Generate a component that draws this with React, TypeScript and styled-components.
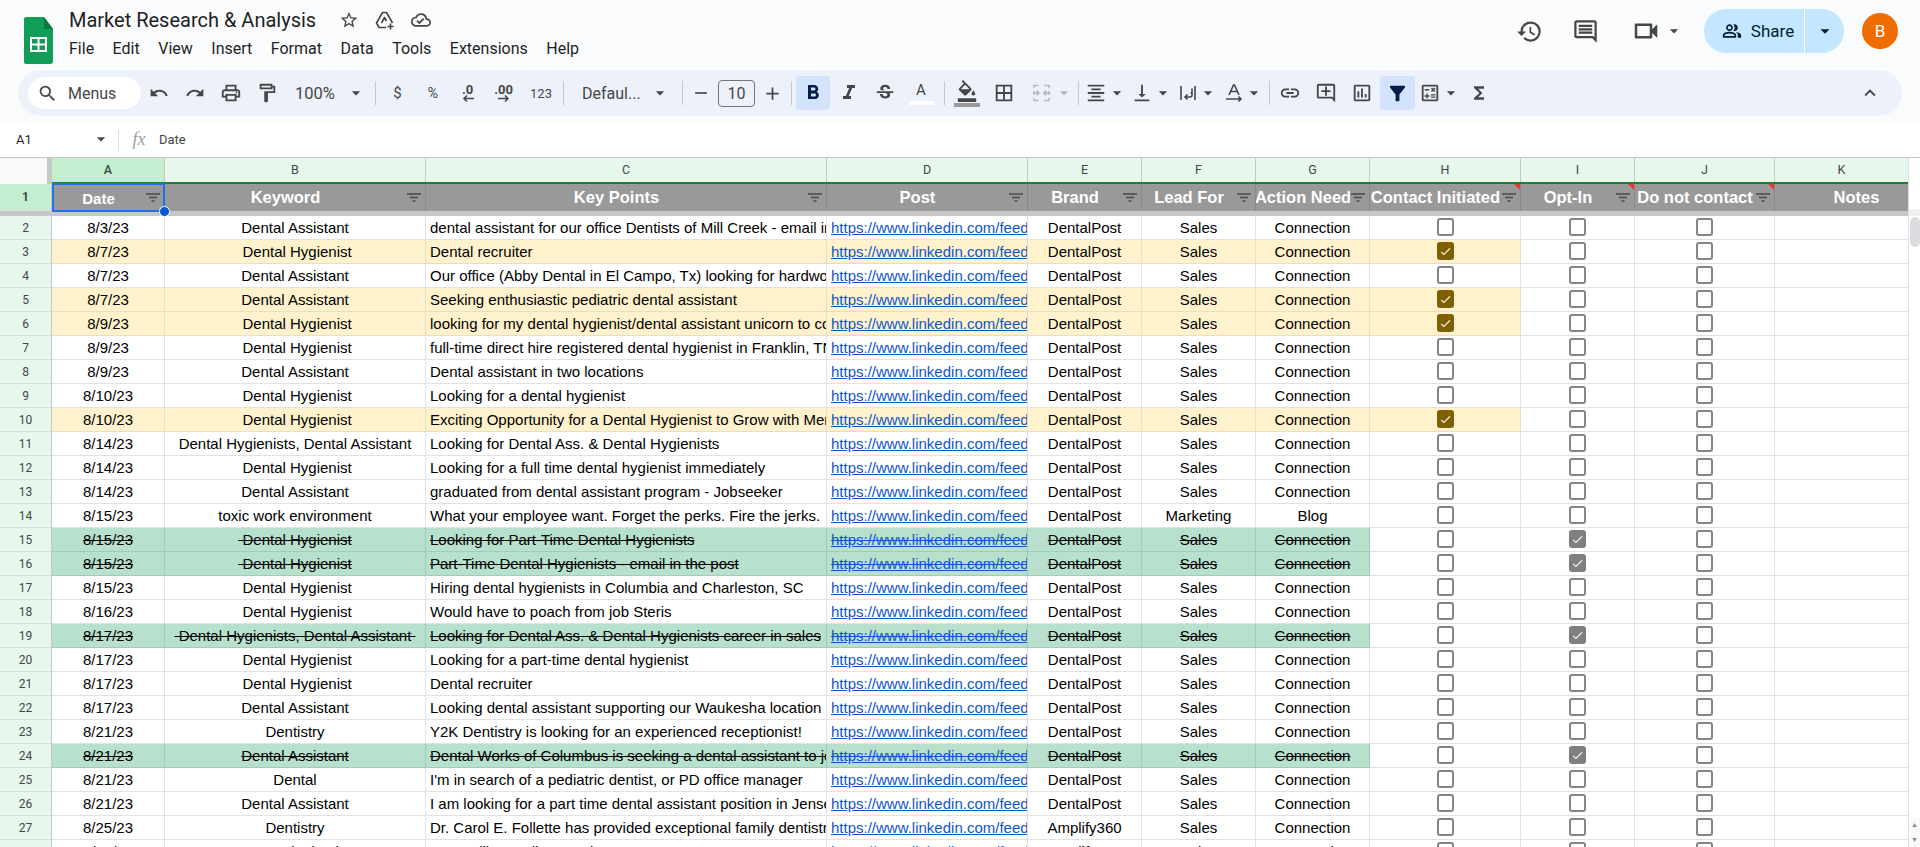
import React from "react";
import styled, { createGlobalStyle } from "styled-components";
import {
  MdSearch, MdUndo, MdRedo, MdOutlinePrint, MdOutlineFormatPaint, MdArrowDropDown, MdFormatBold,
  MdFormatItalic, MdStrikethroughS, MdFormatColorFill, MdBorderAll, MdFormatAlignCenter, MdVerticalAlignBottom,
  MdLink, MdOutlineAddComment, MdOutlineInsertChart, MdFilterAlt, MdFunctions, MdKeyboardArrowUp,
  MdHistory, MdOutlineComment, MdOutlineVideocam, MdOutlinePeopleAlt, MdStarBorder, MdOutlineCloudDone,
  MdAdd, MdRemove, MdCheck, MdOutlineCalculate,
} from "react-icons/md";

const Global = createGlobalStyle`
  html, body { margin: 0; padding: 0; height: 100%; overflow: hidden; background: #f9fbfd; }
  #root { height: 100%; }
`;

const Page = styled.div`
  height: 847px; overflow: hidden; display: flex; flex-direction: column; background: #f9fbfd;
  font-family: Roboto, "Liberation Sans", sans-serif; color: #444746;
`;

/* ---------- title bar ---------- */
const TitleBar = styled.header`
  height: 70px; flex: none; display: flex; align-items: flex-start; padding: 0 22px 0 24px; box-sizing: border-box;
`;
const Logo = styled.svg` width: 29px; height: 47px; margin-top: 17px; flex: none; `;
const TitleBlock = styled.div` margin-left: 16px; display: flex; flex-direction: column; `;
const TitleRow = styled.div` display: flex; align-items: center; height: 26px; margin-top: 7px; `;
const DocTitle = styled.div` font-size: 20px; color: #1f1f1f; width: 262px; white-space: nowrap; `;
const TitleIcon = styled.span`
  width: 36px; display: flex; justify-content: center; font-size: 20px; color: #444746;
`;
const Menu = styled.nav` display: flex; gap: 18.5px; margin-top: 6px; font-size: 16px; color: #1f1f1f; line-height: 20px; `;
const HeaderActions = styled.div` margin-left: auto; display: flex; align-items: center; height: 44px; margin-top: 9px; `;
const RoundAction = styled.span<{ $w: number }>`
  width: ${p => p.$w}px; display: flex; align-items: center; justify-content: center; color: #444746; font-size: 27px;
`;
const VideoAction = styled.span`
  width: 85px; padding-left: 18px; box-sizing: border-box; display: flex; align-items: center; gap: 3px; color: #444746; font-size: 30px;
`;
const SharePill = styled.div`
  display: flex; height: 44px; width: 140px; margin-left: 6px; border-radius: 22px; background: #c2e7ff; overflow: hidden; color: #001d35;
`;
const ShareMain = styled.div`
  width: 101px; box-sizing: border-box; padding-left: 8px; display: flex; align-items: center; justify-content: center; gap: 9px; font-size: 17px;
  border-right: 1px solid #fff; font-weight: 400;
`;
const ShareCaret = styled.div` flex: 1; display: flex; align-items: center; justify-content: center; font-size: 22px; `;
const Avatar = styled.div`
  width: 36px; height: 36px; border-radius: 50%; background: #ef6c00; color: #fff; margin-left: 18px;
  display: flex; align-items: center; justify-content: center; font-size: 17px;
`;

/* ---------- toolbar ---------- */
const Toolbar = styled.div`
  height: 46px; flex: none; margin: 0 18px; padding: 0 20px 0 10px; box-sizing: border-box; border-radius: 23px;
  background: #edf2fa; display: flex; align-items: center;
`;
const SearchPill = styled.div`
  width: 113px; height: 32px; flex: none; box-sizing: border-box; border-radius: 16px; background: #fff; display: flex; align-items: center;
  padding-left: 9px; gap: 10px; font-size: 16px; color: #444746;
`;
const Tool = styled.span<{ $w: number; $active?: boolean; $dim?: boolean; $size?: number; $pad?: number }>`
  width: ${p => p.$w}px; height: 34px; flex: none; display: flex; align-items: center; box-sizing: border-box;
  justify-content: ${p => (p.$pad !== undefined ? "flex-start" : "center")};
  padding-left: ${p => p.$pad ?? 0}px;
  border-radius: 4px; font-size: ${p => p.$size ?? 22}px; position: relative;
  color: ${p => (p.$active ? "#041e49" : p.$dim ? "#b4b8bc" : "#444746")};
  background: ${p => (p.$active ? "#d3e3fd" : "transparent")};
`;
const ToolText = styled.span<{ $size?: number }>` font-size: ${p => p.$size ?? 14}px; color: #444746; `;
const Sep = styled.span<{ $w: number }>`
  width: ${p => p.$w}px; flex: none; height: 24px; display: flex; justify-content: center;
  &::before { content: ""; width: 1px; height: 100%; background: #c7c7c7; }
`;
const ZoomSelect = styled.div`
  width: 86px; flex: none; display: flex; align-items: center; gap: 11px; padding-left: 11px; box-sizing: border-box; font-size: 16.5px; color: #444746;
`;
const FontSelect = styled.div`
  width: 110px; flex: none; display: flex; align-items: center; padding: 0 7px 0 15px; box-sizing: border-box; font-size: 16px; color: #444746; justify-content: space-between;
`;
const Caret = styled.span<{ $dim?: boolean; $gap?: number }>`
  display: flex; font-size: 20px; color: ${p => (p.$dim ? "#b4b8bc" : "#444746")}; margin-left: ${p => p.$gap ?? 0}px;
`;
const SizeBox = styled.div`
  width: 37px; height: 27px; margin: 0 3px 0 4px; flex: none; box-sizing: border-box; border: 1px solid #747775; border-radius: 4px;
  display: flex; align-items: center; justify-content: center; font-size: 16px; color: #444746;
`;
const ColorA = styled.span`
  display: flex; flex-direction: column; align-items: center; font-size: 15px; line-height: 16px; color: #444746;
  &::after { content: ""; width: 25px; height: 4px; margin-top: 3px; background: #fff; }
`;
const FillIcon = styled.span`
  display: flex; flex-direction: column; align-items: center; line-height: 0;
  &::after { content: ""; width: 26px; height: 4px; margin-top: 1px; background: #999; }
`;
const DecimalBtn = styled.span`
  display: flex; flex-direction: column; align-items: center; font-size: 13px; font-weight: 700; line-height: 11px; color: #444746;
`;
const Spacer = styled.span` flex: 1; `;

/* ---------- formula bar ---------- */
const FormulaBar = styled.div`
  height: 33px; flex: none; margin-top: 8px; padding-bottom: 3px; box-sizing: border-box; background: #fff; display: flex; align-items: center; font-size: 13px; color: #444746;
`;
const NameBox = styled.div`
  width: 119px; height: 100%; flex: none; box-sizing: border-box; padding: 0 8px 0 16px; display: flex; align-items: center;
  justify-content: space-between; color: #1f1f1f; position: relative;
  &::after { content: ""; position: absolute; right: 0; top: 6px; bottom: 3px; width: 1px; background: #dadce0; }
`;
const Fx = styled.span`
  width: 40px; flex: none; text-align: center; font-family: "Liberation Serif", serif; font-style: italic; font-size: 18px; color: #9aa0a6;
`;

/* ---------- sheet ---------- */
const SheetArea = styled.div` flex: 1; min-height: 0; display: flex; background: #fff; border-top: 1px solid #c7c7c7; `;
const Sheet = styled.div` width: 1908px; flex: none; display: flex; flex-direction: column; overflow: hidden; `;
const ScrollRail = styled.div`
  flex: 1; border-left: 1px solid #e0e0e0; display: flex; flex-direction: column; background: #fff;
`;
const RailTop = styled.div` height: 51px; flex: none; `;
const RailBand = styled.div` height: 7px; flex: none; background: #eef0f2; `;
const RailThumb = styled.div` width: 10px; height: 30px; margin: 1px 0 0 1px; border-radius: 5px; background: #dadce0; `;
const RailArrows = styled.div`
  margin-top: auto; height: 30px; background: #f8f9fa; display: flex; flex-direction: column; align-items: center; justify-content: space-around;
  font-size: 7px; color: #80868b; line-height: 8px;
`;
const ColHeadRow = styled.div` height: 24px; flex: none; display: flex; border-bottom: 2px solid #188038; `;
const Corner = styled.div`
  width: 52px; flex: none; box-sizing: border-box; background: #f8f9fa; border-right: 5px solid #c7c7c7; margin-bottom: -2px; position: relative; z-index: 1;
`;
const ColHead = styled.div<{ $w: number; $sel?: boolean }>`
  width: ${p => p.$w}px; flex: none; box-sizing: border-box; border-right: 1px solid #c7c7c7; padding-bottom: 2px;
  background: ${p => (p.$sel ? "#c4eed0" : "#e6f7ec")}; color: #444746; font-size: 12.5px; display: flex; align-items: center; justify-content: center;
  font-family: Roboto, sans-serif; font-weight: ${p => (p.$sel ? 500 : 400)};
`;
const RowHead = styled.div<{ $sel?: boolean }>`
  width: 52px; flex: none; box-sizing: border-box; border-right: 1px solid #c7c7c7; border-bottom: 1px solid #dadce0;
  background: ${p => (p.$sel ? "#c4eed0" : "#e6f7ec")}; color: #444746; font-size: 12px; display: flex; align-items: center; justify-content: center;
  font-family: Roboto, sans-serif; font-weight: ${p => (p.$sel ? 700 : 400)};
`;
const HeadRow = styled.div` height: 27px; flex: none; display: flex; `;
const HeadCell = styled.div<{ $w: number; $shift?: number }>`
  width: ${p => p.$w}px; flex: none; box-sizing: border-box; background: #999; border-right: 1px solid #8a8a8a; position: relative;
  display: flex; align-items: center; padding-left: ${p => p.$shift ?? 0}px;
`;
const HeadLabel = styled.div<{ $small?: boolean; $plain?: boolean }>`
  flex: 1; min-width: 0; overflow: hidden; white-space: nowrap; display: flex; justify-content: center; color: #fff; font-weight: 700;
  font-family: "Liberation Sans", Arial, sans-serif; font-size: ${p => (p.$small ? 15 : 16.5)}px;
  margin-top: ${p => (p.$small ? 2 : 0)}px; margin-bottom: ${p => (p.$small ? 0 : 2)}px;
  margin-right: ${p => (p.$plain ? 0 : 19)}px; line-height: 20px;
`;
const FilterMark = styled.svg` position: absolute; right: 3px; top: 7px; width: 16px; height: 13px; `;
const NoteFlag = styled.span`
  position: absolute; right: 0; top: 0; width: 0; height: 0; border-top: 6px solid #e53935; border-left: 6px solid transparent;
`;
const SelBox = styled.div`
  position: absolute; inset: -1px -1px -1px 0; border: 2px solid #1a73e8; pointer-events: none; z-index: 2;
`;
const Handle = styled.span`
  position: absolute; right: -7px; bottom: -7px; width: 9px; height: 9px; border-radius: 50%; background: #0b57d0; border: 1.5px solid #fff; z-index: 3;
`;
const FreezeBar = styled.div` height: 5px; flex: none; background: #c7c7c7; `;
const Row = styled.div` height: 24px; flex: none; display: flex; `;
const fills: Record<string, { bg: string; line: string }> = {
  none: { bg: "#fff", line: "#e2e2e2" },
  yellow: { bg: "#fff2cc", line: "#e9dfc0" },
  green: { bg: "#b7e1cd", line: "#a3ccb8" },
};
const Cell = styled.div<{ $w: number; $fill: string; $align?: string; $strike?: boolean }>`
  width: ${p => p.$w}px; flex: none; box-sizing: border-box; overflow: hidden; white-space: nowrap;
  padding: 0 ${p => (p.$align === "left" ? "0 0 4px" : "3px")};
  background: ${p => fills[p.$fill].bg};
  border-right: 1px solid ${p => fills[p.$fill].line}; border-bottom: 1px solid ${p => fills[p.$fill].line};
  font-family: "Liberation Sans", Arial, sans-serif; font-size: 15px; line-height: 23px; color: #000;
  text-align: ${p => p.$align ?? "center"};
  text-decoration: ${p => (p.$strike ? "line-through" : "none")};
`;
const LinkText = styled.a<{ $strike?: boolean }>`
  color: #1155cc; text-decoration: underline ${p => (p.$strike ? "line-through" : "")};
`;
const CheckCell = styled.div<{ $w: number; $fill: string }>`
  width: ${p => p.$w}px; flex: none; box-sizing: border-box; display: flex; align-items: center; justify-content: center; padding-bottom: 1px;
  background: ${p => fills[p.$fill].bg};
  border-right: 1px solid ${p => fills[p.$fill].line}; border-bottom: 1px solid ${p => fills[p.$fill].line};
`;
const Box = styled.span<{ $on?: boolean; $tone?: string }>`
  width: 17px; height: 18px; box-sizing: border-box; border-radius: 3px; display: flex; align-items: center; justify-content: center;
  border: 2px solid ${p => (p.$on ? p.$tone : "#858585")}; background: ${p => (p.$on ? p.$tone : "transparent")}; color: #fff; font-size: 15px;
`;
const EmptyCell = styled.div<{ $w: number }>`
  width: ${p => p.$w}px; flex: none; box-sizing: border-box; border-right: 1px solid #e2e2e2; border-bottom: 1px solid #e2e2e2;
`;

/* ---------- data ---------- */
const W = { a: 113, b: 261, c: 401, d: 201, e: 114, f: 114, g: 114, h: 151, i: 114, j: 140, k: 134 };
const DA = "Dental Assistant", DH = "\u00a0Dental Hygienist", BOTH = "\u00a0Dental Hygienists, Dental Assistant\u00a0";
type R = [string, string, string, string?];
const data: R[] = [
  ["8/3/23", DA, "dental assistant for our office Dentists of Mill Creek - email in the post"],
  ["8/7/23", DH, "Dental recruiter", "y"],
  ["8/7/23", DA, "Our office (Abby Dental in El Campo, Tx) looking for hardworking"],
  ["8/7/23", DA, "Seeking enthusiastic pediatric dental assistant", "y"],
  ["8/9/23", DH, "looking for my dental hygienist/dental assistant unicorn to come", "y"],
  ["8/9/23", DH, "full-time direct hire registered dental hygienist in Franklin, TN"],
  ["8/9/23", DA, "Dental assistant in two locations"],
  ["8/10/23", DH, "Looking for a dental hygienist"],
  ["8/10/23", DH, "Exciting Opportunity for a Dental Hygienist to Grow with Meridian", "y"],
  ["8/14/23", BOTH, "Looking for Dental Ass. & Dental Hygienists"],
  ["8/14/23", DH, "Looking for a full time dental hygienist immediately"],
  ["8/14/23", DA, "graduated from dental assistant program - Jobseeker"],
  ["8/15/23", "toxic work environment", "What your employee want. Forget the perks. Fire the jerks."],
  ["8/15/23", DH, "Looking for Part-Time Dental Hygienists", "g"],
  ["8/15/23", DH, "Part-Time Dental Hygienists - email in the post", "g"],
  ["8/15/23", DH, "Hiring dental hygienists in Columbia and Charleston, SC"],
  ["8/16/23", DH, "Would have to poach from job Steris"],
  ["8/17/23", BOTH, "Looking for Dental Ass. & Dental Hygienists career in sales", "g"],
  ["8/17/23", DH, "Looking for a part-time dental hygienist"],
  ["8/17/23", DH, "Dental recruiter"],
  ["8/17/23", DA, "Looking dental assistant supporting our Waukesha location"],
  ["8/21/23", "Dentistry", "Y2K Dentistry is looking for an experienced receptionist!"],
  ["8/21/23", DA, "Dental Works of Columbus is seeking a dental assistant to join", "g"],
  ["8/21/23", "Dental", "I'm in search of a pediatric dentist, or PD office manager"],
  ["8/21/23", DA, "I am looking for a part time dental assistant position in Jensen"],
  ["8/25/23", "Dentistry", "Dr. Carol E. Follette has provided exceptional family dentistry"],
  ["8/25/23", "Cosmetic dentist", "Greenville Family Dental Care"],
];
const headers: { key: string; w: number; label: string; flag?: boolean }[] = [
  { key: "B", w: W.b, label: "Keyword" },
  { key: "C", w: W.c, label: "Key Points" },
  { key: "D", w: W.d, label: "Post" },
  { key: "E", w: W.e, label: "Brand" },
  { key: "F", w: W.f, label: "Lead For" },
  { key: "G", w: W.g, label: "Action Need" },
  { key: "H", w: W.h, label: "Contact Initiated", flag: true },
  { key: "I", w: W.i, label: "Opt-In", flag: true },
  { key: "J", w: W.j, label: "Do not contact", flag: true },
];

const Filter = () => (
  <FilterMark viewBox="0 0 16 13">
    <path d="M1 3h14M4 6.5h8M6.5 10h3" stroke="#4a4a4a" strokeWidth="1.6" fill="none" />
  </FilterMark>
);

const DataRow = ({ r, n }: { r: R; n: number }) => {
  const kind = r[3];
  const fill = kind === "y" ? "yellow" : kind === "g" ? "green" : "none";
  const s = kind === "g";
  const marketing = n === 14;
  const amp = n >= 27;
  const tone = kind === "y" ? "#7f6000" : "#7f7f7f";
  return (
    <Row>
      <RowHead>{n}</RowHead>
      <Cell $w={W.a} $fill={fill} $strike={s}>{r[0]}</Cell>
      <Cell $w={W.b} $fill={fill} $strike={s}>{r[1]}</Cell>
      <Cell $w={W.c} $fill={fill} $strike={s} $align="left">{r[2]}</Cell>
      <Cell $w={W.d} $fill={fill} $align="left"><LinkText $strike={s}>https://www.linkedin.com/feed/update</LinkText></Cell>
      <Cell $w={W.e} $fill={fill} $strike={s}>{amp ? "Amplify360" : "DentalPost"}</Cell>
      <Cell $w={W.f} $fill={fill} $strike={s}>{marketing ? "Marketing" : "Sales"}</Cell>
      <Cell $w={W.g} $fill={fill} $strike={s}>{marketing ? "Blog" : "Connection"}</Cell>
      <CheckCell $w={W.h} $fill={kind === "y" ? "yellow" : "none"}>
        <Box $on={kind === "y"} $tone={tone}>{kind === "y" && <MdCheck />}</Box>
      </CheckCell>
      <CheckCell $w={W.i} $fill="none"><Box $on={s} $tone={tone}>{s && <MdCheck />}</Box></CheckCell>
      <CheckCell $w={W.j} $fill="none"><Box /></CheckCell>
      <EmptyCell $w={W.k} />
    </Row>
  );
};

export default function App() {
  return (
    <Page>
      <Global />
      <TitleBar>
        <Logo viewBox="0 0 29 47">
          <path d="M2 0h18l9 12v32a3 3 0 0 1-3 3H2a2 2 0 0 1-2-2V2a2 2 0 0 1 2-2z" fill="#0f9d58" />
          <path d="M20 0l9 12h-9z" fill="#0b7a43" />
          <path d="M6 20h17v15H6z" fill="#fff" />
          <path d="M8 22h5.5v4.5H8zM15.5 22H21v4.5h-5.5zM8 28.5h5.5V33H8zM15.5 28.5H21V33h-5.5z" fill="#0f9d58" />
        </Logo>
        <TitleBlock>
          <TitleRow>
            <DocTitle>Market Research &amp; Analysis</DocTitle>
            <TitleIcon><MdStarBorder /></TitleIcon>
            <TitleIcon>
              <svg width="20" height="20" viewBox="0 0 20 20" fill="none" stroke="#444746" strokeWidth="1.6" strokeLinejoin="round">
                <path d="M7.5 2.5h4l6 10.5M7.5 2.5 1.5 13l2.5 4.5h7M6.5 13l3-5.5 2 3.5" />
                <path d="M15.5 13.5v6M12.5 16.5h6" />
              </svg>
            </TitleIcon>
            <TitleIcon><MdOutlineCloudDone /></TitleIcon>
          </TitleRow>
          <Menu>
            <span>File</span><span>Edit</span><span>View</span><span>Insert</span><span>Format</span>
            <span>Data</span><span>Tools</span><span>Extensions</span><span>Help</span>
          </Menu>
        </TitleBlock>
        <HeaderActions>
          <RoundAction $w={56}><MdHistory /></RoundAction>
          <RoundAction $w={56}><MdOutlineComment /></RoundAction>
          <VideoAction><MdOutlineVideocam /><Caret><MdArrowDropDown /></Caret></VideoAction>
          <SharePill>
            <ShareMain><MdOutlinePeopleAlt size={20} />Share</ShareMain>
            <ShareCaret><MdArrowDropDown /></ShareCaret>
          </SharePill>
          <Avatar>B</Avatar>
        </HeaderActions>
      </TitleBar>

      <Toolbar>
        <SearchPill><MdSearch size={21} />Menus</SearchPill>
        <Tool $w={36} $size={20}><MdUndo /></Tool>
        <Tool $w={36} $size={20}><MdRedo /></Tool>
        <Tool $w={36}><MdOutlinePrint /></Tool>
        <Tool $w={35}><MdOutlineFormatPaint /></Tool>
        <ZoomSelect>100%<Caret><MdArrowDropDown /></Caret></ZoomSelect>
        <Sep $w={10} />
        <Tool $w={35}><ToolText $size={15}>$</ToolText></Tool>
        <Tool $w={36}><ToolText>%</ToolText></Tool>
        <Tool $w={33}><DecimalBtn>.0<svg width="12" height="7" viewBox="0 0 12 7"><path d="M12 3.5H2M5 .5l-3 3 3 3" stroke="#444746" strokeWidth="1.5" fill="none" /></svg></DecimalBtn></Tool>
        <Tool $w={39}><DecimalBtn>.00<svg width="12" height="7" viewBox="0 0 12 7"><path d="M0 3.5h10M7 .5l3 3-3 3" stroke="#444746" strokeWidth="1.5" fill="none" /></svg></DecimalBtn></Tool>
        <Tool $w={36}><ToolText $size={13}>123</ToolText></Tool>
        <Sep $w={8} />
        <FontSelect>Defaul...<Caret><MdArrowDropDown /></Caret></FontSelect>
        <Sep $w={10} />
        <Tool $w={27} $size={20}><MdRemove /></Tool>
        <SizeBox>10</SizeBox>
        <Tool $w={28} $size={21}><MdAdd /></Tool>
        <Sep $w={10} />
        <Tool $w={34} $active $size={24}><MdFormatBold /></Tool>
        <Tool $w={38} $size={24}><MdFormatItalic /></Tool>
        <Tool $w={34}><MdStrikethroughS /></Tool>
        <Tool $w={38}><ColorA>A</ColorA></Tool>
        <Sep $w={8} />
        <Tool $w={38}><FillIcon><MdFormatColorFill size={22} /></FillIcon></Tool>
        <Tool $w={36}><MdBorderAll /></Tool>
        <Tool $w={52} $dim $pad={10}>
          <svg width="20" height="20" viewBox="0 0 20 20" fill="none" stroke="#b4b8bc" strokeWidth="1.6">
            <path d="M7 2H2v3M2 8v4M2 15v3h5M13 2h5v3M18 8v4M18 15v3h-5M1 10h6M5 7.5 7.5 10 5 12.5M19 10h-6M15 7.5 12.5 10l2.5 2.5" />
          </svg>
          <Caret $dim $gap={3}><MdArrowDropDown /></Caret>
        </Tool>
        <Sep $w={8} />
        <Tool $w={46} $pad={3}><MdFormatAlignCenter /><Caret><MdArrowDropDown /></Caret></Tool>
        <Tool $w={46} $pad={3}><MdVerticalAlignBottom /><Caret><MdArrowDropDown /></Caret></Tool>
        <Tool $w={46} $pad={4}>
          <svg width="20" height="20" viewBox="0 0 20 20" fill="none" stroke="#444746" strokeWidth="1.6">
            <path d="M3 3v14M17 3v14M14 10h-1.5M14 5.5v6.5a2 2 0 0 1-2 2H7M9.5 11.5 7 14l2.5 2.5" />
          </svg>
          <Caret><MdArrowDropDown /></Caret>
        </Tool>
        <Tool $w={46} $pad={4}>
          <svg width="20" height="20" viewBox="0 0 20 20" fill="none" stroke="#444746" strokeWidth="1.6">
            <path d="M5 12 9.5 2h1L15 12M6.5 8.5h7M2 16h15M14.5 13.5 17 16l-2.5 2.5" />
          </svg>
          <Caret><MdArrowDropDown /></Caret>
        </Tool>
        <Sep $w={6} />
        <Tool $w={36}><MdLink /></Tool>
        <Tool $w={36}><MdOutlineAddComment /></Tool>
        <Tool $w={36}><MdOutlineInsertChart /></Tool>
        <Tool $w={35} $active $size={23}><MdFilterAlt /></Tool>
        <Tool $w={49}><MdOutlineCalculate /><Caret><MdArrowDropDown /></Caret></Tool>
        <Tool $w={30} $size={20}><MdFunctions /></Tool>
        <Spacer />
        <Tool $w={24} $size={22}><MdKeyboardArrowUp /></Tool>
      </Toolbar>

      <FormulaBar>
        <NameBox>A1<Caret><MdArrowDropDown /></Caret></NameBox>
        <Fx>fx</Fx>
        Date
      </FormulaBar>

      <SheetArea>
        <Sheet>
          <ColHeadRow>
            <Corner />
            <ColHead $w={W.a} $sel>A</ColHead>
            {headers.map(h => <ColHead key={h.key} $w={h.w}>{h.key}</ColHead>)}
            <ColHead $w={W.k}>K</ColHead>
          </ColHeadRow>
          <HeadRow>
            <RowHead $sel>1</RowHead>
            <HeadCell $w={W.a}>
              <HeadLabel $small>Date</HeadLabel>
              <Filter />
              <SelBox><Handle /></SelBox>
            </HeadCell>
            {headers.map(h => (
              <HeadCell key={h.key} $w={h.w}>
                <HeadLabel>{h.label}</HeadLabel>
                <Filter />
                {h.flag && <NoteFlag />}
              </HeadCell>
            ))}
            <HeadCell $w={W.k} $shift={30}><HeadLabel $plain>Notes</HeadLabel></HeadCell>
          </HeadRow>
          <FreezeBar />
          {data.map((r, i) => <DataRow key={i} r={r} n={i + 2} />)}
        </Sheet>
        <ScrollRail>
          <RailTop />
          <RailBand />
          <RailThumb />
          <RailArrows><span>▲</span><span>▼</span></RailArrows>
        </ScrollRail>
      </SheetArea>
    </Page>
  );
}
